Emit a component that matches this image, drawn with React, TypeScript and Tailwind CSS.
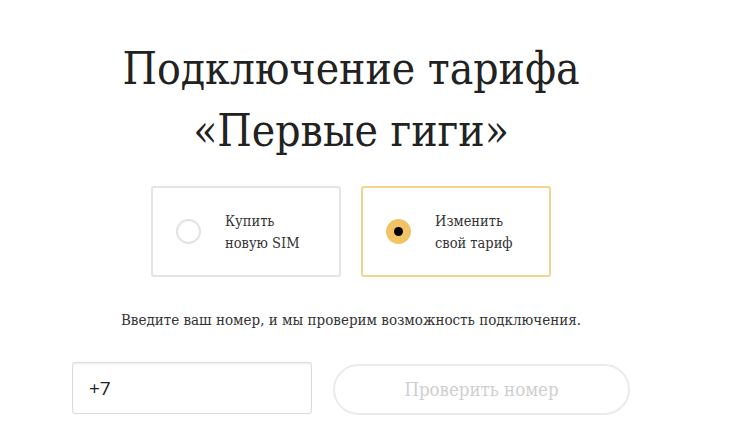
import { useState } from 'react';

const slab = { fontFamily: '"DejaVu Serif Condensed", "DejaVu Serif", serif' };

function TariffOption({
  title,
  subtitle,
  selected,
  onClick,
}: {
  title: string;
  subtitle: string;
  selected: boolean;
  onClick: () => void;
}) {
  return (
    <button
      onClick={onClick}
      className={
        selected
          ? 'flex h-[91px] w-[190px] items-center gap-[24px] rounded-[3px] border-2 border-[#f2d48e] bg-white pl-[23px] text-left'
          : 'flex h-[91px] w-[190px] items-center gap-[24px] rounded-[3px] border-2 border-[#e4e4e4] bg-white pl-[23px] text-left'
      }
    >
      {selected ? (
        <span className="flex h-[25px] w-[25px] shrink-0 items-center justify-center rounded-full bg-[#f1c364]">
          <span className="h-[9px] w-[9px] rounded-full bg-black" />
        </span>
      ) : (
        <span className="h-[25px] w-[25px] shrink-0 rounded-full border-2 border-[#e2e2e2]" />
      )}
      <span className="text-[14.5px] leading-[22px] text-[#333]">
        {title}
        <br />
        {subtitle}
      </span>
    </button>
  );
}

export default function App() {
  const [mode, setMode] = useState<'new' | 'change'>('change');

  return (
    <div className="h-[434px] w-[733px] overflow-hidden bg-white" style={slab}>
      <div className="flex w-[702px] flex-col items-center pt-[38px]">
        <h1 className="text-center text-[44px] leading-[62px] font-normal text-[#222]">
          Подключение тарифа
          <br />
          «Первые гиги»
        </h1>

        <div className="mt-[24px] flex gap-[20px]">
          <TariffOption
            title="Купить"
            subtitle="новую SIM"
            selected={mode === 'new'}
            onClick={() => setMode('new')}
          />
          <TariffOption
            title="Изменить"
            subtitle="свой тариф"
            selected={mode === 'change'}
            onClick={() => setMode('change')}
          />
        </div>

        <p className="mt-[33px] text-[15px] leading-[20px] text-[#333]">
          Введите ваш номер, и мы проверим возможность подключения.
        </p>

        <div className="mt-[32px] flex items-start gap-[21px]">
          <div className="flex h-[52px] w-[240px] items-center rounded-[3px] border border-[#dcdcdc] px-[16px] shadow-[inset_0_1px_2px_rgba(0,0,0,0.08)]">
            <span
              className="text-[19px] text-[#222]"
              style={{ fontFamily: '"Open Sans", "Liberation Sans", sans-serif' }}
            >
              +7
            </span>
          </div>
          <button className="mt-[2px] h-[51px] w-[297px] rounded-full border-2 border-[#ebebeb] text-[18.5px] text-[#cfcfcf]">
            Проверить номер
          </button>
        </div>
      </div>
    </div>
  );
}
